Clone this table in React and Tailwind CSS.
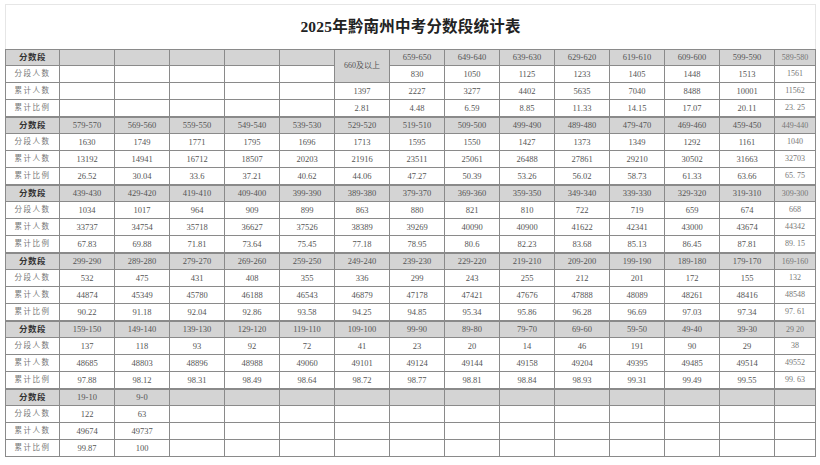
import React from "react";

const groups = [
  {
    h: ["", "", "", "", "", "660及以上", "659-650", "649-640", "639-630", "629-620", "619-610", "609-600", "599-590", "589-580"],
    a: ["", "", "", "", "", null, "830", "1050", "1125", "1233", "1405", "1448", "1513", "1561"],
    b: ["", "", "", "", "", "1397", "2227", "3277", "4402", "5635", "7040", "8488", "10001", "11562"],
    c: ["", "", "", "", "", "2.81", "4.48", "6.59", "8.85", "11.33", "14.15", "17.07", "20.11", "23. 25"],
  },
  {
    h: ["579-570", "569-560", "559-550", "549-540", "539-530", "529-520", "519-510", "509-500", "499-490", "489-480", "479-470", "469-460", "459-450", "449-440"],
    a: ["1630", "1749", "1771", "1795", "1696", "1713", "1595", "1550", "1427", "1373", "1349", "1292", "1161", "1040"],
    b: ["13192", "14941", "16712", "18507", "20203", "21916", "23511", "25061", "26488", "27861", "29210", "30502", "31663", "32703"],
    c: ["26.52", "30.04", "33.6", "37.21", "40.62", "44.06", "47.27", "50.39", "53.26", "56.02", "58.73", "61.33", "63.66", "65. 75"],
  },
  {
    h: ["439-430", "429-420", "419-410", "409-400", "399-390", "389-380", "379-370", "369-360", "359-350", "349-340", "339-330", "329-320", "319-310", "309-300"],
    a: ["1034", "1017", "964", "909", "899", "863", "880", "821", "810", "722", "719", "659", "674", "668"],
    b: ["33737", "34754", "35718", "36627", "37526", "38389", "39269", "40090", "40900", "41622", "42341", "43000", "43674", "44342"],
    c: ["67.83", "69.88", "71.81", "73.64", "75.45", "77.18", "78.95", "80.6", "82.23", "83.68", "85.13", "86.45", "87.81", "89. 15"],
  },
  {
    h: ["299-290", "289-280", "279-270", "269-260", "259-250", "249-240", "239-230", "229-220", "219-210", "209-200", "199-190", "189-180", "179-170", "169-160"],
    a: ["532", "475", "431", "408", "355", "336", "299", "243", "255", "212", "201", "172", "155", "132"],
    b: ["44874", "45349", "45780", "46188", "46543", "46879", "47178", "47421", "47676", "47888", "48089", "48261", "48416", "48548"],
    c: ["90.22", "91.18", "92.04", "92.86", "93.58", "94.25", "94.85", "95.34", "95.86", "96.28", "96.69", "97.03", "97.34", "97. 61"],
  },
  {
    h: ["159-150", "149-140", "139-130", "129-120", "119-110", "109-100", "99-90", "89-80", "79-70", "69-60", "59-50", "49-40", "39-30", "29 20"],
    a: ["137", "118", "93", "92", "72", "41", "23", "20", "14", "46", "191", "90", "29", "38"],
    b: ["48685", "48803", "48896", "48988", "49060", "49101", "49124", "49144", "49158", "49204", "49395", "49485", "49514", "49552"],
    c: ["97.88", "98.12", "98.31", "98.49", "98.64", "98.72", "98.77", "98.81", "98.84", "98.93", "99.31", "99.49", "99.55", "99. 63"],
  },
  {
    h: ["19-10", "9-0", "", "", "", "", "", "", "", "", "", "", "", ""],
    a: ["122", "63", "", "", "", "", "", "", "", "", "", "", "", ""],
    b: ["49674", "49737", "", "", "", "", "", "", "", "", "", "", "", ""],
    c: ["99.87", "100", "", "", "", "", "", "", "", "", "", "", "", ""],
  },
];

const serif = { fontFamily: '"Liberation Serif", "Noto Sans CJK SC", serif' };

function Cell({ children, head, label, bold, span, last }) {
  return (
    <div
      className={
        "flex items-center justify-center border-r border-b border-[#8a8a8a] whitespace-nowrap " +
        (head ? "bg-[#d4d4d4] border-t border-t-[#8a8a8a] " : "bg-white ") +
        (span ? "row-span-2 bg-[#d4d4d4] " : "") +
        (bold
          ? "text-[8.5px] font-bold text-[#333] tracking-[0.5px] "
          : label
          ? "text-[7.5px] text-[#777] tracking-[1.5px] "
          : last
          ? "text-[8px] text-[#777] "
          : "text-[8.5px] text-[#555] ")
      }
    >
      {children}
    </div>
  );
}

export default function App() {
  const cells = [];
  groups.forEach((g, gi) => {
    cells.push(
      <Cell key={`h${gi}`} head bold>
        分数段
      </Cell>
    );
    g.h.forEach((v, i) => {
      const span = gi === 0 && i === 5;
      cells.push(
        span ? (
          <div
            key={`h${gi}-${i}`}
            className="row-span-2 flex items-center justify-center border-r border-b border-t border-[#8a8a8a] bg-[#d4d4d4] text-[8px] text-[#555] whitespace-nowrap"
          >
            {v}
          </div>
        ) : (
          <Cell key={`h${gi}-${i}`} head last={i === 13}>
            {v}
          </Cell>
        )
      );
    });
    [
      ["分段人数", g.a],
      ["累计人数", g.b],
      ["累计比例", g.c],
    ].forEach(([lab, arr], ri) => {
      cells.push(
        <Cell key={`l${gi}-${ri}`} label>
          {lab}
        </Cell>
      );
      arr.forEach((v, i) => {
        if (v === null) return;
        cells.push(
          <Cell key={`c${gi}-${ri}-${i}`} last={i === 13}>
            {v}
          </Cell>
        );
      });
    });
  });

  return (
    <div className="w-[820px] h-[465px] bg-white overflow-hidden" style={serif}>
      <div className="ml-[5px] mt-[4px] w-[811px]">
        <div className="h-[45px] border-t border-l border-r border-[#e6e6e6] flex items-center justify-center">
          <span className="text-[15.5px] font-bold text-[#222] tracking-[0.2px]">
            2025年黔南州中考分数段统计表
          </span>
        </div>
        <div className="grid grid-cols-[54px_repeat(13,55px)_41px] grid-rows-[repeat(24,17px)] border-l border-[#8a8a8a]">
          {cells}
        </div>
      </div>
    </div>
  );
}
